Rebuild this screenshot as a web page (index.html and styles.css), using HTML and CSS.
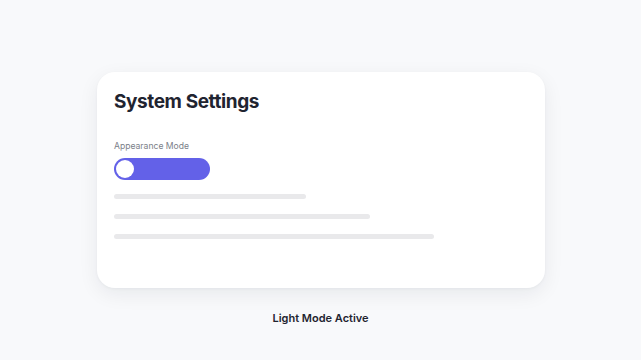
FILE: index.html
```html
<!DOCTYPE html>
<html lang="en">
<head>
<meta charset="utf-8">
<title>System Settings</title>
<link rel="stylesheet" href="styles.css">
</head>
<body>
<main class="stage">
  <section class="card">
    <h1 class="title">System Settings</h1>
    <div class="setting">
      <div class="label">Appearance Mode</div>
      <div class="toggle" role="switch" aria-checked="false"><span class="knob"></span></div>
    </div>
    <div class="lines">
      <div class="line w60"></div>
      <div class="line w80"></div>
      <div class="line w100"></div>
    </div>
  </section>
  <p class="caption">Light Mode Active</p>
</main>
</body>
</html>
```
FILE: styles.css
```css
* { box-sizing: border-box; }
html, body { margin: 0; padding: 0; }
body {
  background: #f8f9fb;
  font-family: Inter, "Noto Sans", sans-serif;
  width: 641px;
  height: 360px;
  overflow: hidden;
}
.stage {
  display: flex;
  flex-direction: column;
  align-items: center;
  padding-top: 72px;
}
.card {
  width: 448px;
  height: 216px;
  background: #ffffff;
  border-radius: 18px;
  box-shadow: 0 6px 20px rgba(17, 24, 39, 0.07), 0 1px 3px rgba(17, 24, 39, 0.04);
  padding: 18px 17px;
  margin-left: 1px;
}
.title {
  margin: 0;
  font-size: 19px;
  line-height: 24px;
  font-weight: 700;
  color: #1f2430;
  letter-spacing: -0.4px;
}
.setting {
  margin-top: 26px;
  display: flex;
  flex-direction: column;
  gap: 6px;
}
.label {
  font-size: 8.6px;
  line-height: 12px;
  color: #7b8089;
}
.toggle {
  width: 96px;
  height: 22px;
  border-radius: 11px;
  background: #6361e8;
  padding: 2px;
  display: flex;
  align-items: center;
}
.knob {
  width: 18px;
  height: 18px;
  border-radius: 50%;
  background: #ffffff;
}
.lines {
  margin-top: 14px;
  width: 320px;
  display: flex;
  flex-direction: column;
  gap: 15px;
}
.line {
  height: 5px;
  border-radius: 3px;
  background: #e9e9eb;
}
.w60 { width: 60%; }
.w80 { width: 80%; }
.w100 { width: 100%; }
.caption {
  margin: 22px 0 0;
  font-size: 11px;
  line-height: 16px;
  font-weight: 600;
  color: #1f2430;
}
```
